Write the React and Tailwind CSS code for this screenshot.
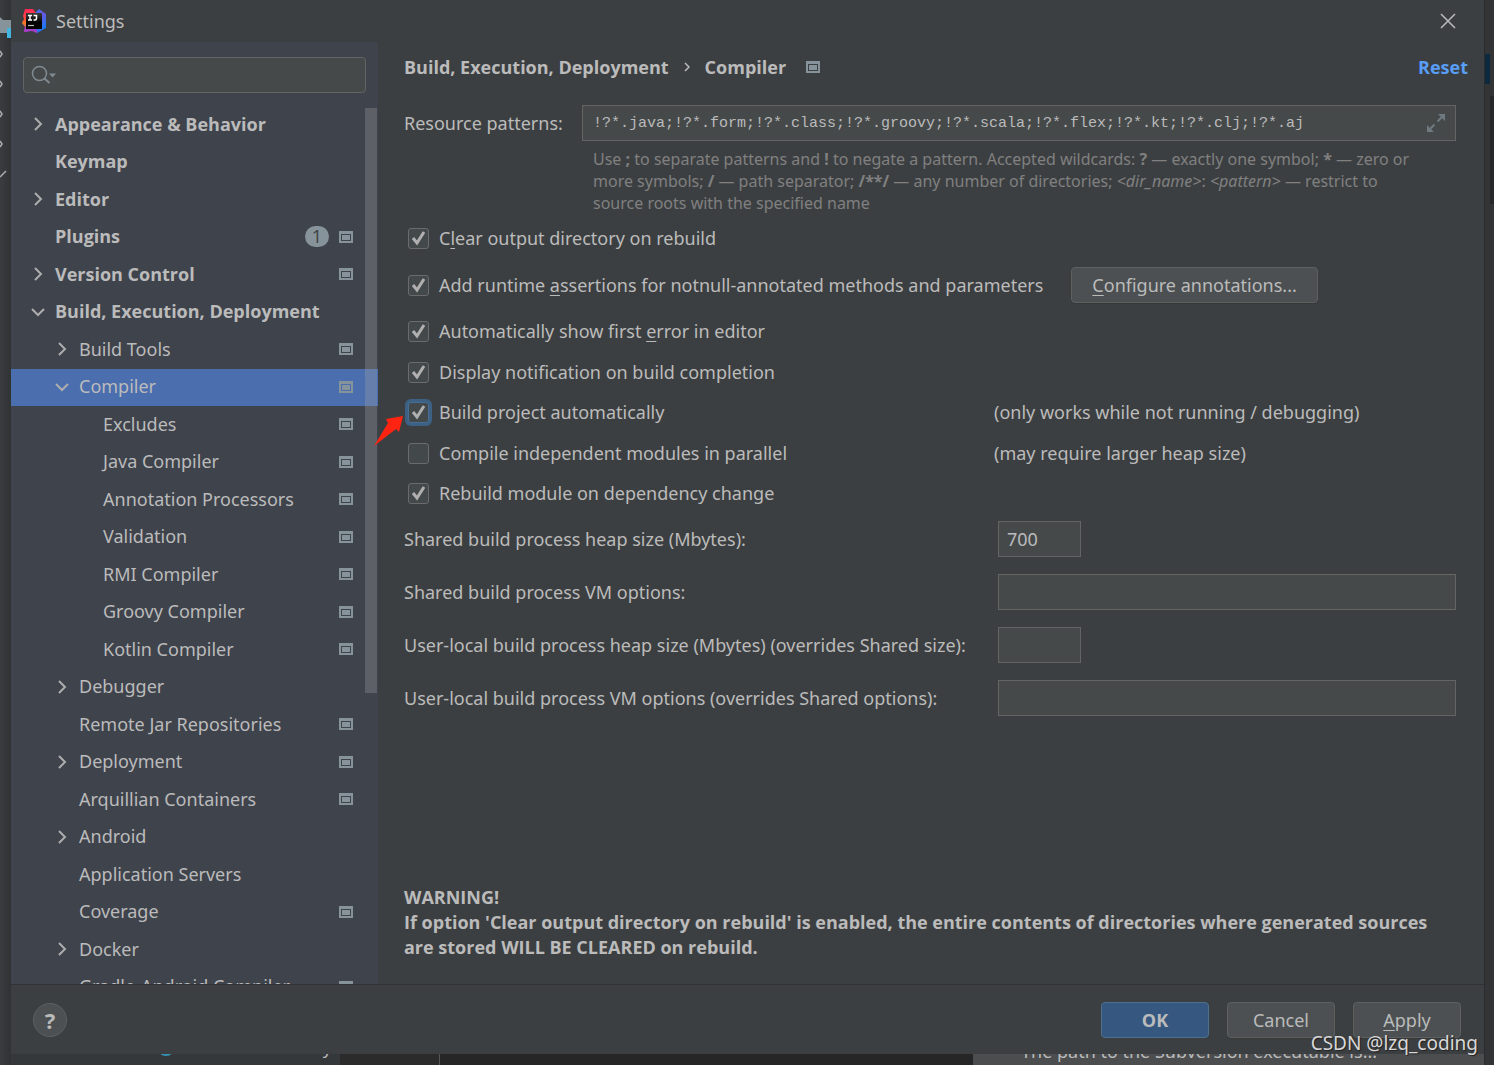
import { useState } from 'react';
import clsx from 'clsx';

const TREE = [
  { label: 'Appearance & Behavior', level: 0, arrow: 'right' },
  { label: 'Keymap', level: 0 },
  { label: 'Editor', level: 0, arrow: 'right' },
  { label: 'Plugins', level: 0, badge: 1, project: true },
  { label: 'Version Control', level: 0, arrow: 'right', project: true },
  { label: 'Build, Execution, Deployment', level: 0, arrow: 'down' },
  { label: 'Build Tools', level: 1, arrow: 'right', project: true },
  { label: 'Compiler', level: 1, arrow: 'down', project: true },
  { label: 'Excludes', level: 2, project: true },
  { label: 'Java Compiler', level: 2, project: true },
  { label: 'Annotation Processors', level: 2, project: true },
  { label: 'Validation', level: 2, project: true },
  { label: 'RMI Compiler', level: 2, project: true },
  { label: 'Groovy Compiler', level: 2, project: true },
  { label: 'Kotlin Compiler', level: 2, project: true },
  { label: 'Debugger', level: 1, arrow: 'right' },
  { label: 'Remote Jar Repositories', level: 1, project: true },
  { label: 'Deployment', level: 1, arrow: 'right', project: true },
  { label: 'Arquillian Containers', level: 1, project: true },
  { label: 'Android', level: 1, arrow: 'right' },
  { label: 'Application Servers', level: 1 },
  { label: 'Coverage', level: 1, project: true },
  { label: 'Docker', level: 1, arrow: 'right' },
  { label: 'Gradle-Android Compiler', level: 1, project: true },
];

const BOLD = "font-['Open_Sans',sans-serif] font-bold";
const INDENT = ['pl-5', 'pl-11', 'pl-17'];

const OPTIONS = [
  { id: 'clear', label: <>C<u>l</u>ear output directory on rebuild</>, checked: true },
  { id: 'assertions', label: <>Add runtime <u>a</u>ssertions for notnull-annotated methods and parameters</>, checked: true, configure: true, height: 'h-[52px]' },
  { id: 'first-error', label: <>Automatically show first <u>e</u>rror in editor</>, checked: true },
  { id: 'notify', label: 'Display notification on build completion', checked: true, height: 'h-10' },
  { id: 'auto-build', label: 'Build project automatically', checked: true, focused: true, note: '(only works while not running / debugging)' },
  { id: 'parallel', label: 'Compile independent modules in parallel', checked: false, note: '(may require larger heap size)', height: 'h-10' },
  { id: 'dependency', label: 'Rebuild module on dependency change', checked: true },
];

const FIELDS = [
  { id: 'shared-heap', label: 'Shared build process heap size (Mbytes):', value: '700', short: true },
  { id: 'shared-vm', label: 'Shared build process VM options:', value: '' },
  { id: 'local-heap', label: 'User-local build process heap size (Mbytes) (overrides Shared size):', value: '', short: true },
  { id: 'local-vm', label: 'User-local build process VM options (overrides Shared options):', value: '' },
];

const FIELD = 'h-9 border border-[#646464] bg-[#45494a] text-[#bbbbbb] outline-none';
const BUTTON = 'h-9 rounded-[4px] border border-[#5e6060] bg-[#4c5052] text-center shadow-[0_1px_1px_#36393a]';

function IdeaLogo() {
  return (
    <svg width="24" height="24" viewBox="0 0 24 24">
      <defs>
        <linearGradient id="ij-left" x1="0" y1="0" x2="0" y2="1">
          <stop offset="0" stopColor="#fe2857" />
          <stop offset="0.45" stopColor="#fb4a3c" />
          <stop offset="0.6" stopColor="#fc801d" />
          <stop offset="1" stopColor="#9a3fd0" />
        </linearGradient>
        <linearGradient id="ij-right" x1="0" y1="0" x2="0.6" y2="1">
          <stop offset="0" stopColor="#2f7bf6" />
          <stop offset="0.5" stopColor="#6b57e0" />
          <stop offset="1" stopColor="#147bf5" />
        </linearGradient>
        <linearGradient id="ij-box" x1="0" y1="0" x2="0" y2="1">
          <stop offset="0" stopColor="#3a3a3a" />
          <stop offset="0.6" stopColor="#000" />
        </linearGradient>
      </defs>
      <path d="M13 4l4-4 7 5v14l-9 5-5-3z" fill="url(#ij-right)" />
      <path d="M3 0h8l3 4-7 13-1 3 1 2-5 1 1-5-3-4 2-4-1-3z" fill="url(#ij-left)" />
      <path d="M3 18h5l7 3v3l-5-2-8 1z" fill="#a63cc8" />
      <rect x="4" y="4" width="16" height="16" fill="url(#ij-box)" />
      <path d="M6 6.500h4M8 6v5M6 11h4M11.500 6.500h3v3q0 1.500-1.500 1.500h-1.500" fill="none" stroke="#fff" strokeWidth="1.500" />
      <path d="M6 16.500h6" stroke="#bbb" strokeWidth="1.200" />
    </svg>
  );
}

function ProjectIcon() {
  return (
    <svg width="14" height="12" viewBox="0 0 14 12" className="shrink-0 text-[#87939a]">
      <path
        fillRule="evenodd"
        fill="currentColor"
        d="M0 0h14v12H0zM2 3v7h10V3zM3 4h8v5H3z"
      />
    </svg>
  );
}

function Chevron({ direction }) {
  return (
    <svg width="14" height="14" viewBox="0 0 14 14" fill="none" stroke="#adadad" strokeWidth="2">
      <path d={direction === 'down' ? 'M1 4l6 6 6-6' : 'M4 1l6 6-6 6'} />
    </svg>
  );
}

function TreeItem({ item, selected, onSelect }) {
  return (
    <li className="h-[38px] even:h-[37px]">
      <button
        type="button"
        onClick={onSelect}
        className={clsx(
          'flex h-full w-full items-center pr-[25px] pb-0.5 text-left whitespace-nowrap',
          INDENT[item.level],
          item.level === 0 && BOLD,
          selected && 'bg-[#4b6eaf]'
        )}
      >
        <span className="w-6 shrink-0">{item.arrow && <Chevron direction={item.arrow} />}</span>
        <span className="flex-1">{item.label}</span>
        {item.badge && (
          <span className="mr-2.5 flex h-[21px] w-6 items-center justify-center rounded-full bg-[#87939a] font-normal text-[#3c3f41]">
            {item.badge}
          </span>
        )}
        {item.project && <ProjectIcon />}
      </button>
    </li>
  );
}

function Sidebar() {
  const [selected, setSelected] = useState('Compiler');

  return (
    <aside className="flex w-[367px] shrink-0 flex-col bg-[#3f434c] pt-[15px]">
      <div className="relative mx-3 mb-[13px] shrink-0">
        <input
          type="search"
          aria-label="Search settings"
          className="block h-9 w-full rounded-[4px] border border-[#646464] bg-[#45494a] pl-10 outline-none"
        />
        <svg width="26" height="20" viewBox="0 0 26 20" className="pointer-events-none absolute top-2 left-2">
          <circle cx="8.500" cy="8.500" r="7" fill="none" stroke="#7f8b91" strokeWidth="1.500" />
          <path d="M13.500 13.500l5 4.500" stroke="#7f8b91" strokeWidth="2" />
          <path d="M18 8.500h7l-3.500 4z" fill="#7f8b91" />
        </svg>
      </div>
      <div className="relative min-h-0 flex-1 overflow-hidden">
        <ul>
          {TREE.map(item => (
            <TreeItem
              key={item.label}
              item={item}
              selected={item.label === selected}
              onSelect={() => setSelected(item.label)}
            />
          ))}
        </ul>
        <div className="absolute top-0.5 right-px h-2/3 w-3 bg-[#a6a6a6]/30" />
      </div>
    </aside>
  );
}

function CheckBox({ id, checked, focused }) {
  return (
    <span className="relative mr-[10px] ml-1 flex h-[21px] w-[21px] shrink-0">
      <input
        id={id}
        type="checkbox"
        defaultChecked={checked}
        className={clsx(
          'peer h-full w-full appearance-none rounded-[3px] border bg-[#43494a] outline-none',
          focused ? 'border-[#466d94] ring-3 ring-[#3d6185]' : 'border-[#6b6b6b]'
        )}
      />
      <svg
        viewBox="0 0 21 21"
        fill="none"
        stroke="#b0b0b0"
        strokeWidth="3"
        className="pointer-events-none absolute inset-0 hidden peer-checked:block"
      >
        <path d="M5 10l4 5L16 4" />
      </svg>
      {focused && (
        <svg width="30" height="30" viewBox="0 0 30 30" className="pointer-events-none absolute top-3.5 -left-[34px]">
          <path d="M0 30L14 7l-2-4L29 0l-4 16-3-3z" fill="#ff2412" />
        </svg>
      )}
    </span>
  );
}

function OptionRow({ option }) {
  return (
    <div className={clsx('flex items-center', option.height || 'h-[41px]')}>
      <div className={clsx('flex items-center', !option.configure && 'w-[590px]')}>
        <CheckBox id={option.id} checked={option.checked} focused={option.focused} />
        <label htmlFor={option.id} className="whitespace-nowrap">{option.label}</label>
      </div>
      {option.configure && (
        <button type="button" className={clsx(BUTTON, 'ml-7 px-5 whitespace-nowrap')}>
          <u>C</u>onfigure annotations...
        </button>
      )}
      {option.note && <span className="whitespace-nowrap">{option.note}</span>}
    </div>
  );
}

function CompilerPage() {
  return (
    <main className="flex min-w-0 flex-1 flex-col pb-6 pl-[26px]">
      <div className={clsx('flex h-[50px] items-center pr-4', BOLD)}>
        <span>Build, Execution, Deployment</span>
        <svg width="6" height="10" viewBox="0 0 6 10" fill="none" stroke="#bbbbbb" strokeWidth="1.500" className="mx-[15px]">
          <path d="M1 1l4 4-4 4" />
        </svg>
        <span className="mr-5">Compiler</span>
        <ProjectIcon />
        <a href="#reset" className="ml-auto text-[#589df6]">Reset</a>
      </div>

      <div className="pr-7">
        {/* Resource patterns */}
        <div className="mt-[13px] flex items-center">
          <label htmlFor="patterns" className="w-[178px] shrink-0">Resource patterns:</label>
          <div className="relative flex-1">
            <input
              id="patterns"
              type="text"
              defaultValue="!?*.java;!?*.form;!?*.class;!?*.groovy;!?*.scala;!?*.flex;!?*.kt;!?*.clj;!?*.aj"
              className={clsx(FIELD, 'block w-full pr-10 pl-2.5 font-["Liberation_Mono",monospace] text-[15px]')}
            />
            <svg width="20" height="20" viewBox="0 0 20 20" className="absolute top-2 right-2.5" fill="#6e7a80">
              <path d="M12 1h7v7zM1 12v7h7z" />
              <path d="M11.500 8.500l5-5M8.500 11.500l-5 5" stroke="#6e7a80" strokeWidth="2" />
            </svg>
          </div>
        </div>
        <p className="mt-[7px] mb-1 ml-[189px] text-[16px] leading-[22px] whitespace-nowrap text-[#808080]">
          Use <b>;</b> to separate patterns and <b>!</b> to negate a pattern. Accepted wildcards: <b>?</b> — exactly one symbol; <b>*</b> — zero or<br />
          more symbols; <b>/</b> — path separator; <b>/**/</b> — any number of directories; <i>&lt;dir_name&gt;</i>: <i>&lt;pattern&gt;</i> — restrict to<br />
          source roots with the specified name
        </p>

        {OPTIONS.map(option => <OptionRow key={option.id} option={option} />)}

        {/* Build process settings */}
        <div className="mt-[7px] flex flex-col gap-[17px]">
          {FIELDS.map(field => (
            <div key={field.id} className="flex items-center">
              <label htmlFor={field.id} className="w-[594px] shrink-0 whitespace-nowrap">{field.label}</label>
              <input
                id={field.id}
                type="text"
                defaultValue={field.value}
                className={clsx(FIELD, 'px-2', field.short ? 'w-[83px]' : 'min-w-0 flex-1')}
              />
            </div>
          ))}
        </div>
      </div>

      <p className={clsx('mt-auto pr-10 leading-[25px]', BOLD)}>
        WARNING!<br />
        If option 'Clear output directory on rebuild' is enabled, the entire contents of directories where generated sources are stored WILL BE CLEARED on rebuild.
      </p>
    </main>
  );
}

function Footer() {
  return (
    <footer className="flex h-[70px] shrink-0 items-center gap-[18px] border-t border-[#323232] pr-[23px] pl-[22px]">
      <button type="button" aria-label="Help" className="mr-auto h-[34px] w-[34px] rounded-full border border-[#5e6060] bg-[#4c5052] text-[22px] leading-none font-bold">
        ?
      </button>
      <button type="button" className={clsx('h-9 w-[108px] rounded-[4px] border border-[#4c708c] bg-[#365880] pt-0.5', BOLD)}>OK</button>
      <button type="button" className={clsx(BUTTON, 'w-[108px] pt-0.5')}>Cancel</button>
      <button type="button" className={clsx(BUTTON, 'w-[108px] pt-0.5')}><u>A</u>pply</button>
    </footer>
  );
}

// Sliver of the IDE window that shows left of the dialog
function LeftEdge() {
  return (
    <div className="w-[11px] shrink-0 overflow-hidden bg-linear-to-r from-[#3a3d3f] to-[#303234]">
      <svg width="11" height="190" viewBox="0 0 11 190" fill="none" stroke="#adadad" strokeWidth="1.500">
        <path d="M0 17l3 3h8v13H0z" fill="#87939a" stroke="none" />
        <path d="M7 28h4v10H7z" fill="#40b6e0" stroke="none" />
        <path d="M0 51l2 3-2 3M0 81l2 3-2 3M0 111l2 3-2 3M0 141l2 3-2 3M0 177l6-6" />
      </svg>
    </div>
  );
}

function RightEdge() {
  return (
    <div className="flex w-2.5 shrink-0 flex-col border-l border-[#2b2b2b] bg-[#323436]">
      <div className="mt-[54px] h-[30px] w-[5px] bg-[#0d293e]" />
      <div className="mt-3 ml-[5px] h-[108px] bg-[#262829]" />
    </div>
  );
}

function BottomEdge() {
  return (
    <div className="flex h-[11px] shrink-0 overflow-hidden bg-[#262626]">
      <div className="relative flex w-[329px] items-start justify-end bg-[#35383a] pr-2 leading-none">
        <span className="absolute -top-4 left-[146px] h-[18px] w-[18px] rounded-full bg-[#3592b4]" />
        <span className="-mt-4">y</span>
      </div>
      <div className="w-[100px] border-r border-[#555555] bg-[#2b2b2b]" />
      <div className="flex-1" />
      <div className="w-[511px] bg-[#4b4d4f] pl-12 leading-none">
        <div className="-mt-3">The path to the Subversion executable is...</div>
      </div>
    </div>
  );
}

export default function App() {
  return (
    <div className="relative flex h-screen min-h-[1000px] overflow-hidden bg-[#2b2b2b] font-['Noto_Sans',sans-serif] text-[18px] text-[#bbbbbb] [&_u]:underline-offset-3">
      <LeftEdge />
      <div className="flex min-w-0 flex-1 flex-col">
        <div className="flex min-h-0 flex-1 flex-col bg-[#3c3f41]">
          <header className="flex h-[42px] shrink-0 items-center pr-7 pl-[11px]">
            <IdeaLogo />
            <h1 className="ml-2.5">Settings</h1>
            <button type="button" aria-label="Close" className="ml-auto">
              <svg width="16" height="16" viewBox="0 0 16 16" stroke="#bbbbbb" strokeWidth="1.500">
                <path d="M1 1l14 14M15 1L1 15" />
              </svg>
            </button>
          </header>
          <div className="flex min-h-0 flex-1">
            <Sidebar />
            <CompilerPage />
          </div>
          <Footer />
        </div>
        <BottomEdge />
      </div>
      <RightEdge />
      <div className="pointer-events-none absolute right-4 bottom-2 text-[19px] text-[#d8d8d8] [text-shadow:1px_1px_1px_#222]">
        CSDN @lzq_coding
      </div>
    </div>
  );
}
